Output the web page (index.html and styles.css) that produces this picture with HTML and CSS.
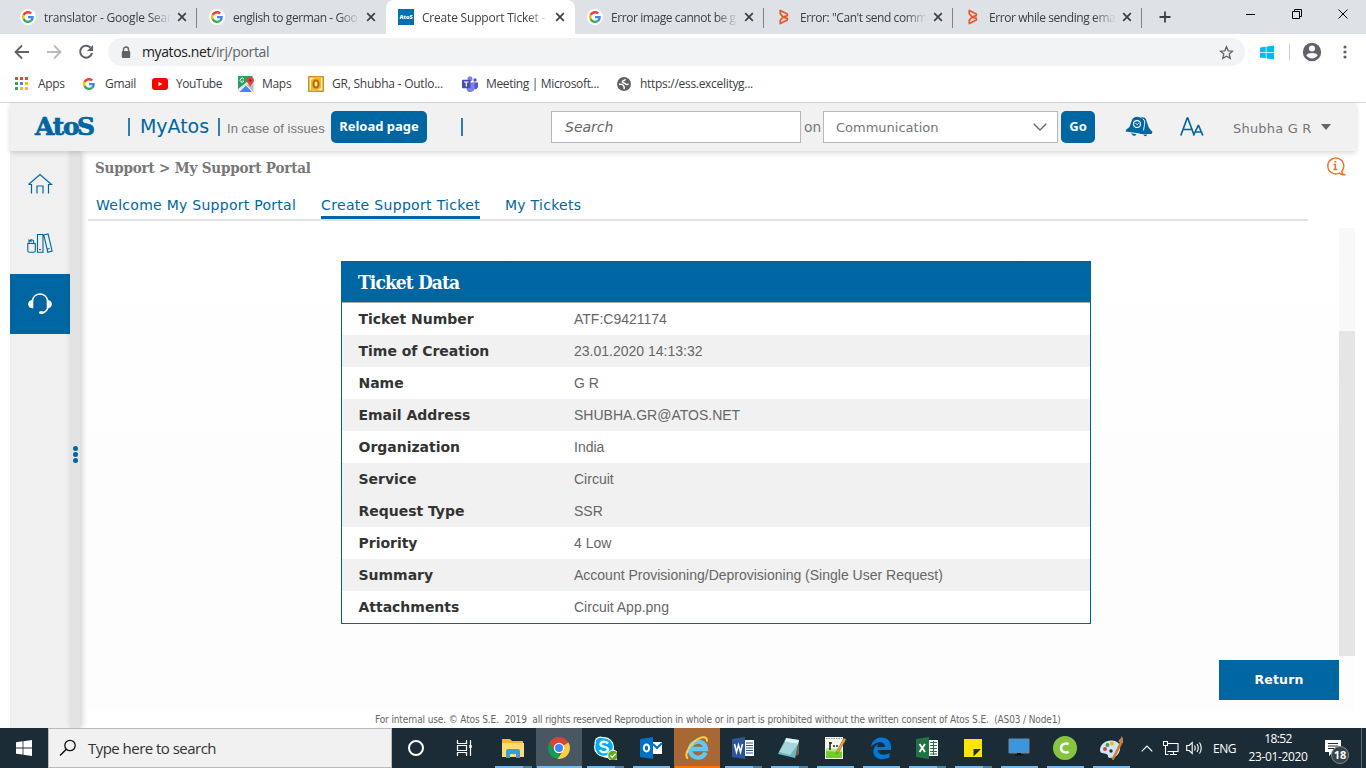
FILE: index.html
```html
<!DOCTYPE html>
<html lang="en">
<head>
<meta charset="utf-8">
<title>Create Support Ticket - MyAtos</title>
<link rel="stylesheet" href="styles.css">
</head>
<body>
<svg class="defs" aria-hidden="true">
  <symbol id="g" viewBox="0 0 48 48"><path fill="#ea4335" d="M24 9.500c3.500 0 6.700 1.200 9.200 3.600l6.900-6.900C35.900 2.400 30.500 0 24 0 14.600 0 6.500 5.400 2.600 13.200l8 6.200C12.400 13.700 17.700 9.500 24 9.500z"/><path fill="#4285f4" d="M47 24.500c0-1.600-.2-3.100-.4-4.500H24v9h12.900c-.6 3-2.200 5.500-4.700 7.200l7.700 6C44.400 38 47 31.800 47 24.500z"/><path fill="#fbbc05" d="M10.500 28.600a14.500 14.500 0 0 1 0-9.200l-8-6.200a24 24 0 0 0 0 21.600z"/><path fill="#34a853" d="M24 48c6.500 0 11.900-2.100 15.900-5.800l-7.700-6c-2.200 1.400-4.900 2.300-8.200 2.300-6.300 0-11.600-4.200-13.500-9.900l-8 6.200C6.500 42.600 14.600 48 24 48z"/></symbol>
  <symbol id="x" viewBox="0 0 10 10"><path d="M1.200 1.200l7.600 7.600M8.800 1.200L1.200 8.800" stroke="#3c4043" stroke-width="1.700"/></symbol>
  <symbol id="bmc" viewBox="0 0 10 16"><path d="M1.300 1.500L8.300 5v1.700L3.500 8l4.800 1.300V11l-7 3.500v-3.200L4 8 1.300 4.700z" fill="none" stroke="#f0562c" stroke-width="1.800" stroke-linejoin="round"/></symbol>
  <symbol id="win" viewBox="0 0 16 16"><path d="M0 2.200L6.600 1.300v6.200H0zM7.400 1.200L16 0v7.500H7.400zM0 8.400h6.600v6.200L0 13.700zM7.400 8.400H16V16l-8.600-1.200z"/></symbol>
</svg>

<div class="tabstrip">
  <div class="tab"><span class="fav"><svg><use href="#g"/></svg></span><span class="title">translator - Google Sear</span><svg class="close"><use href="#x"/></svg></div>
  <div class="tab nosep"><span class="fav"><svg><use href="#g"/></svg></span><span class="title tight">english to german - Goo</span><svg class="close"><use href="#x"/></svg></div>
  <div class="tab active"><span class="atosfav">AtoS</span><span class="title">Create Support Ticket -</span><svg class="close"><use href="#x"/></svg></div>
  <div class="tab"><span class="fav"><svg><use href="#g"/></svg></span><span class="title tight">Error image cannot be g</span><svg class="close"><use href="#x"/></svg></div>
  <div class="tab"><svg class="bmc"><use href="#bmc"/></svg><span class="title tight">Error: "Can't send comm</span><svg class="close"><use href="#x"/></svg></div>
  <div class="tab"><svg class="bmc"><use href="#bmc"/></svg><span class="title tight">Error while sending ema</span><svg class="close"><use href="#x"/></svg></div>
  <svg class="plus" viewBox="0 0 12 12"><path d="M6 .5v11M.5 6h11" stroke="#3c4043" stroke-width="1.800"/></svg>
  <svg class="wincontrols" viewBox="0 0 120 34"><path d="M6 14.500h9M52.500 11.500h7v7h-7zM54.500 11v-1.500h7v7H60M98.500 9.500l9 9M107.500 9.500l-9 9" fill="none" stroke="#000"/></svg>
</div>

<div class="toolbar">
  <svg class="nav" viewBox="0 0 100 36"><g fill="none" stroke-width="1.800"><path d="M29 18H16M22 11.500L15.500 18l6.500 6.500" stroke="#5f6368"/><path d="M47 18h13M54 11.500l6.500 6.500-6.500 6.500" stroke="#babcbe"/><path d="M90.500 13.500A6 6 0 1 0 92 19" stroke="#5f6368" stroke-width="2"/></g><path d="M93 11v6h-6z" fill="#5f6368"/></svg>
  <div class="omnibox">
    <svg class="lock" viewBox="0 0 10 13"><path d="M2.500 5.500V3.500a2.500 2.500 0 0 1 5 0v2" fill="none" stroke="#5f6368" stroke-width="1.400"/><rect x=".8" y="5" width="8.400" height="7" rx="1" fill="#5f6368"/></svg>
    <span class="url"><b>myatos.net</b>/irj/portal</span>
    <svg class="star" viewBox="0 0 16 16"><path d="M8 1.800l1.800 4.400 4.700.4-3.600 3.100 1.100 4.600L8 11.900l-4 2.400 1.100-4.600-3.600-3.100 4.700-.4z" fill="none" stroke="#5f6368" stroke-width="1.400"/></svg>
  </div>
  <svg class="winext"><use href="#win"/></svg>
  <i class="tbsep"></i>
  <svg class="person" viewBox="0 0 20 20"><circle cx="10" cy="10" r="9.200" fill="#5f6368"/><circle cx="10" cy="6.600" r="3" fill="#fff"/><path d="M4.300 13.300c1.600-3.200 9.800-3.200 11.400 0-2.800 4.200-8.600 4.200-11.400 0z" fill="#fff"/></svg>
  <svg class="kebab" viewBox="0 0 4 14"><g fill="#5f6368"><circle cx="2" cy="2" r="1.600"/><circle cx="2" cy="7" r="1.600"/><circle cx="2" cy="12" r="1.600"/></g></svg>
</div>

<div class="bookmarks">
  <svg class="bm apps" viewBox="0 0 13 13"><path d="M0 0h3v3H0zM5 0h3v3H5zM10 0h3v3h-3z" fill="#ea4335"/><path d="M0 5h3v3H0zM0 10h3v3H0z" fill="#34a853"/><path d="M5 5h3v3H5z" fill="#4285f4"/><path d="M10 5h3v3h-3zM5 10h3v3H5zM10 10h3v3h-3z" fill="#fbbc05"/></svg><span class="b1">Apps</span>
  <svg class="bm gm"><use href="#g"/></svg><span class="b2">Gmail</span>
  <svg class="bm yt" viewBox="0 0 16 12"><rect width="16" height="12" rx="3" fill="#f00"/><path d="M6.500 3.800v4.400L10.300 6z" fill="#fff"/></svg><span class="b3">YouTube</span>
  <svg class="bm mp" viewBox="0 0 16 16"><path d="M0 0h15L0 15z" fill="#1fa463"/><path d="M0 15.500V13l10-8 2 2-9 9z" fill="#e8e8e8"/><path d="M1.500 16l6.500-6.500L14 16z" fill="#4285f4"/><path d="M15.500 6v10L8.500 9z" fill="#b9bec5"/><path d="M8.500 4.500a3.700 3.700 0 0 1 7.400 0c0 2.500-3 3.500-3.700 6.500-.7-3-3.700-4-3.700-6.500z" fill="#ea4335"/><circle cx="12.200" cy="4.500" r="1.300" fill="#8c2a20"/><path d="M5.800 3A2 2 0 1 0 6 5H4.500" fill="none" stroke="#fff"/></svg><span class="b4">Maps</span>
  <svg class="bm ol" viewBox="0 0 16 16"><rect x=".8" y=".8" width="14.400" height="14.400" fill="#fff6cf" stroke="#d68b12" stroke-width="1.500"/><path d="M3 4l3-2h7v10l-3 2H3z" fill="#f5b91f"/><ellipse cx="8" cy="8" rx="2.600" ry="3.700" fill="none" stroke="#b96500" stroke-width="1.800"/><ellipse cx="8" cy="8" rx="1.200" ry="2.400" fill="#fff2b0"/></svg><span class="b5">GR, Shubha - Outlo...</span>
  <svg class="bm tm" viewBox="0 0 16 16"><circle cx="8" cy="2.800" r="2.500" fill="#7b83eb"/><circle cx="13" cy="4" r="1.700" fill="#5059c9"/><path d="M11 6.500h5V11a3 3 0 0 1-4 2z" fill="#5059c9"/><path d="M4 6.500h8.500v5a4 4 0 0 1-8 1z" fill="#7b83eb"/><rect y="3.800" width="8.500" height="8.500" rx=".8" fill="#464eb8"/><path d="M2 6h4.600M4.300 6v4.500" stroke="#fff" stroke-width="1.200"/></svg><span class="b6">Meeting | Microsoft...</span>
  <svg class="bm gl" viewBox="0 0 14 14"><circle cx="7" cy="7" r="7" fill="#5f6368"/><path d="M8.500 2.200C8 4 5.500 3 5.300 4.800 5.300 6.500 8 5.500 8.500 7c.8.800 2 .2 3.200.4M2 7c1.800.5 4 .3 4.500 1.600.3 1.200 1.300 1.200.5 3.400" fill="none" stroke="#fff" stroke-width="1.500"/></svg><span class="b7">https://ess.excelityg...</span>
</div>

<main class="portal">
  <header class="head">
    <span class="logo">At<span class="ring">o</span>S</span>
    <i class="bar"></i><span class="brand">MyAtos</span><i class="bar"></i>
    <span class="issues">In case of issues</span>
    <span class="btn reload">Reload page</span>
    <i class="bar"></i>
    <div class="search">Search</div>
    <span class="on">on</span>
    <div class="select"><span>Communication</span><svg viewBox="0 0 14 8"><path d="M.7.7L7 7 13.300.7" fill="none" stroke="#666" stroke-width="1.300"/></svg></div>
    <span class="btn go">Go</span>
    <svg class="bell" viewBox="0 0 28 22"><g fill="#0066a1"><path d="M15 2.500c2-2 5-1.500 6 1l3 8.500 3.500 4-1 2H15z"/><path d="M7 4Q8.500 .8 12.500.8L17 2q2.500 1.500 1.800 5L18 14l.5 4L.5 15.500l.8-2L4.500 11z"/><path d="M6 17.300l5.500 1q-2.500 4-5.500-1zM18 18.500h4.500q-2 3.500-4.500 0z"/></g><circle cx="12" cy="8" r="3.400" fill="none" stroke="#fff" stroke-width="1.100"/><path d="M10.500 7l1.500 1.700 1.800-1.500" fill="none" stroke="#fff" stroke-width=".9"/><path d="M17.800 2.500q3 2 1.700 6l-1 6" fill="none" stroke="#fff" stroke-width=".9"/></svg>
    <svg class="aa" viewBox="0 0 24 20"><path d="M.8 18.500L7.200 1h.6l6.400 17.500M3 12.500h9M13.500 18.500L18.200 8.500h.4l4.200 10M15.500 15h6" fill="none" stroke="#0066a1" stroke-width="1.700"/></svg>
    <span class="user">Shubha G R</span><i class="caret"></i>
  </header>
  <div class="work">
    <nav class="side">
      <a><svg viewBox="0 0 26 22"><path d="M1.500 11.500L13 1.500l11.500 10h-3v9M1.500 11.500h3v9M10 20.500v-7.500h6v7.500" fill="none" stroke="#0066a1" stroke-width="1.200"/></svg></a>
      <a><svg viewBox="0 0 26 22"><path d="M.8 10.500h7.500v7.300q0 1.500-1.500 1.500H2.300q-1.500 0-1.500-1.500zM2 10V7l2 1.500V6.500l2.500 1V10M10.500 1.500h5.500v17.800h-5.500zM16.800 2l4.300-1 4 17-4.300 1.200zM12 16.500h2M20.500 16l2-.5" fill="none" stroke="#0066a1" stroke-width="1.100"/></svg></a>
      <a class="on-item"><svg viewBox="0 0 26 24"><path d="M4.500 9C6-1.500 20-1.500 21.500 9M22 15c-1 4-4 6.500-8 7" fill="none" stroke="#fff" stroke-width="1.700"/><path d="M5.700 7.500v9.200C2.500 17 0 15 0 12s2.500-4.500 5.700-4.500zM20.300 7.500v9.200c3.200.3 5.700-1.700 5.700-4.700s-2.500-4.500-5.700-4.500z" fill="#fff"/><rect x="12" y="20" width="5" height="3" rx="1.500" fill="#fff"/></svg></a>
    </nav>
    <div class="splitter"><i></i><i></i><i></i></div>
    <section class="content">
      <div class="crumbs"><span>Support &gt; My Support Portal</span>
        <svg viewBox="0 0 20 20"><path d="M13.500 16a8 8 0 1 1 2.300-1.800l.6 2.800 2 .8q-3 .5-4.900-1.800z" fill="none" stroke="#f26b21" stroke-width="1.400"/><path d="M7.500 7.500H9.300v4.800M7.300 12.500h4M8.500 4.800h1.700" fill="none" stroke="#f26b21" stroke-width="1.500"/></svg></div>
      <div class="subnav"><span>Welcome My Support Portal</span><span class="cur">Create Support Ticket</span><span>My Tickets</span></div>
      <div class="pane">
        <div class="inner">
          <div class="card">
            <h2>Ticket Data</h2>
            <dl>
              <div><dt>Ticket Number</dt><dd>ATF:C9421174</dd></div>
              <div class="alt"><dt>Time of Creation</dt><dd>23.01.2020 14:13:32</dd></div>
              <div><dt>Name</dt><dd>G R</dd></div>
              <div class="alt"><dt>Email Address</dt><dd>SHUBHA.GR@ATOS.NET</dd></div>
              <div><dt>Organization</dt><dd>India</dd></div>
              <div class="alt"><dt>Service</dt><dd>Circuit</dd></div>
              <div class="alt"><dt>Request Type</dt><dd>SSR</dd></div>
              <div><dt>Priority</dt><dd>4 Low</dd></div>
              <div class="alt"><dt>Summary</dt><dd>Account Provisioning/Deprovisioning (Single User Request)</dd></div>
              <div><dt>Attachments</dt><dd>Circuit App.png</dd></div>
            </dl>
          </div>
          <div class="return">Return</div>
        </div>
        <div class="scroll"><i></i></div>
      </div>
      <footer><span>For internal use. © Atos S.E.&nbsp; 2019&nbsp; all rights reserved Reproduction in whole or in part is prohibited without the written consent of Atos S.E.&nbsp; (AS03 / Node1)</span></footer>
    </section>
  </div>
</main>

<div class="taskbar">
  <div class="start"><svg><use href="#win"/></svg></div>
  <div class="tsearch"><svg viewBox="0 0 18 18"><circle cx="11" cy="6.500" r="5.200" fill="none" stroke="#111" stroke-width="1.300"/><path d="M7.300 10.300L1 16.500" stroke="#111" stroke-width="1.500"/></svg><span>Type here to search</span></div>
  <div class="sys"><svg viewBox="0 0 18 18"><circle cx="9" cy="9" r="7" fill="none" stroke="#fff" stroke-width="2"/></svg></div>
  <div class="sys"><svg viewBox="0 0 18 18"><path d="M2.500 1v3.500h9V1M2.500 17v-3.500h9V17M2.500 6.500h9v5h-9zM15.500 1v16" fill="none" stroke="#fff" stroke-width="1.200"/><path d="M14.300 6h2.400v3h-2.400z" fill="#fff"/></svg></div>
  <div class="apps-row">
    <div class="app two"><svg viewBox="0 0 24 24"><path d="M1 3h8l2 2h11v15H1z" fill="#f4b92e"/><path d="M1 7h22v14H1z" fill="#ffdc75"/><path d="M5 22v-7q0-2 2-2h10q2 0 2 2v7h-4v-4H9v4z" fill="#3d9ae2"/></svg></div>
    <div class="app hot"><svg viewBox="0 0 24 24"><path d="M12 12L2.500 6.500A11 11 0 0 1 21.500 6.500z" fill="#db4437"/><path d="M12 12L2.500 6.500A11 11 0 0 0 12 23z" fill="#0f9d58"/><path d="M12 12l9.500-5.500A11 11 0 0 1 12 23l-1.500-.1L16.500 14z" fill="#ffcd40"/><path d="M2.500 6.500L7 14l5-7h9.700" fill="#db4437"/><circle cx="12" cy="12" r="5.200" fill="#fff"/><circle cx="12" cy="12" r="4" fill="#4285f4"/></svg></div>
    <div class="app two"><svg viewBox="0 0 24 24"><circle cx="7.500" cy="6.500" r="6" fill="#fff"/><circle cx="14" cy="15" r="7" fill="#fff"/><circle cx="11" cy="11" r="10" fill="#fff"/><circle cx="11" cy="11" r="8.800" fill="#00aff0"/><circle cx="7.500" cy="6.500" r="4.800" fill="#00aff0"/><path d="M15 7.500C13 5 7 5 7.500 8.500c.4 3 7.500 1.500 7.500 5 0 3.500-6.500 3.500-8 .5" fill="none" stroke="#fff" stroke-width="2.300"/><circle cx="20" cy="19.500" r="5.300" fill="#5fad13" stroke="#fff"/><path d="M17.500 19.500l1.800 1.800 3.300-3.500" fill="none" stroke="#fff" stroke-width="1.400"/></svg></div>
    <div class="app"><svg viewBox="0 0 24 24"><path d="M13 6h10v12H13z" fill="#fff"/><path d="M14 8l4 4 5-5" fill="none" stroke="#0072c6" stroke-width="2"/><path d="M1 3l13-2v22L1 21z" fill="#0072c6"/><ellipse cx="7.500" cy="12" rx="2.700" ry="3.500" fill="none" stroke="#fff" stroke-width="2"/></svg></div>
    <div class="app ie"><svg viewBox="0 0 24 24"><path d="M20.500 16.500A8 8 0 1 1 21 13H7" fill="none" stroke="#5fc8f4" stroke-width="4.300"/><path d="M3 22.500C-1 20 3 11 9.500 5.500S22.500-.5 22 5.500" fill="none" stroke="#f8d34a" stroke-width="2"/></svg></div>
    <div class="app two"><svg viewBox="0 0 24 24"><path d="M13 4h10v16H13z" fill="#fff"/><path d="M15 7h7M15 9.500h7M15 12h7M15 14.500h7M15 17h7" stroke="#2b579a"/><path d="M1 3l13-2v22L1 21z" fill="#2b579a"/><path d="M3.500 8l2 8 2-7 2 7 2-8" fill="none" stroke="#fff" stroke-width="1.500"/></svg></div>
    <div class="app two"><svg viewBox="0 0 24 24"><path d="M22 5v13l-4 3z" fill="#735c45"/><path d="M9 2l13 2-4 18L1 18z" fill="#6fb3bd"/><path d="M9 2l13 2-1 4L8 6z" fill="#dff3f5"/><path d="M8 6l13 2-8 11-11-3z" fill="#a5d6dc"/></svg></div>
    <div class="app"><svg viewBox="0 0 24 24"><path d="M2 1h18v22H2z" fill="#f4f6ee"/><path d="M3 14h16v8H3z" fill="#6fce2e"/><path d="M3 12l16 1v3L3 15z" fill="#b8e88f"/><path d="M7 6v8M6 7h3M10 10h2M13 10h2" stroke="#222" stroke-width="1.500"/><path d="M3 2.500h16" stroke="#999" stroke-dasharray="1.500 1"/><path d="M21 2l2 1.500L15 17l-2 1 .5-2.500z" fill="#e5a83a" stroke="#8a5a20" stroke-width=".6"/></svg></div>
    <div class="app"><svg viewBox="0 0 24 24"><path d="M2 11C3 4 8 1.500 12.500 1.500 19 1.500 22 6 22 11v3H8.500c.3 5 7.500 6 12 3v4.500C11 26 3 21 4.500 14 5 11 7 9 9.500 8 8.500 9 8.200 10 8.200 11H16c0-6-8.500-6.500-14 0z" fill="#0078d7"/></svg></div>
    <div class="app two"><svg viewBox="0 0 24 24"><path d="M13 4h10v16H13z" fill="#fff"/><path d="M15 6.500h7M15 9.500h7M15 12.500h7M15 15.500h7M15 18h7M18.500 5v14" stroke="#217346"/><path d="M1 3l13-2v22L1 21z" fill="#217346"/><path d="M4.500 8l5.500 8M10 8l-5.500 8" stroke="#fff" stroke-width="1.900"/></svg></div>
    <div class="app two"><svg viewBox="0 0 24 24"><path d="M3 3h18v18H3z" fill="#ffe600"/><path d="M12.500 20.500v-7.500H20z" fill="#1e2e38"/></svg></div>
    <div class="app"><svg viewBox="0 0 24 24"><path d="M2 3h20v14H2z" fill="#3b96dd" stroke="#6e8796"/><path d="M10 17h4v1.500h2v1H8v-1h2z" fill="#111"/></svg></div>
    <div class="app"><svg viewBox="0 0 24 24"><circle cx="12" cy="12" r="12" fill="#86c540"/><path d="M15.500 8.500c-2-2-7.500-1-7.500 3.500s5.500 5.500 7.500 3.500" fill="none" stroke="#fff" stroke-width="2.500"/></svg></div>
    <div class="app"><svg viewBox="0 0 24 24"><path d="M1 14C1 8 7 4 13 4.500c5 .4 9 3 8 9-.8 5-5 8.500-10 8.500-3 0-1-3-3.500-4S1 18 1 14z" fill="#cfe6f3"/><circle cx="6" cy="13" r="2" fill="#e23f37"/><circle cx="8.500" cy="9" r="2" fill="#3fa345"/><circle cx="13" cy="7.500" r="2" fill="#f1b81c"/><circle cx="12" cy="15" r="1.700" fill="#1e2e38"/><path d="M22 5l-9 18 1.500.5L23.500 6z" fill="#d87e25" stroke="#d87e25"/><path d="M19.500 6c0-3 3-3 3-6 2 2 2 5 1 7z" fill="#b6865f"/></svg></div>
  </div>
  <svg class="chev" viewBox="0 0 12 7"><path d="M.7 6.300L6 1l5.300 5.300" fill="none" stroke="#fff" stroke-width="1.200"/></svg>
  <svg class="net" viewBox="0 0 17 14"><path d="M5 2.500h11v8H5.500M8 13.500h7M11.500 10.500v3M3.500 5v8.500h3M1.500.5h4v4h-4z" fill="none" stroke="#fff" stroke-width="1.100"/></svg>
  <svg class="vol" viewBox="0 0 17 14"><path d="M.7 4.500h2.500l3-3v11l-3-3H.7zM8.500 4.500q1.500 2.500 0 5M11 3q2.500 4 0 8M13.500 1.500q3.500 5.500 0 11" fill="none" stroke="#fff" stroke-width="1.100"/></svg>
  <span class="lang">ENG</span>
  <div class="clock"><span class="time">18:52</span><span class="date">23-01-2020</span></div>
  <div class="note"><svg viewBox="0 0 16 16"><path d="M0 0h16v12H8l-4 4v-4H0z" fill="#fff"/><path d="M3 3.500h10M3 6h10M3 8.500h6" stroke="#1e2e38"/></svg><b>18</b></div>
  <i class="peek"></i>
</div>
</body>
</html>
```
FILE: styles.css
```css
* { box-sizing: border-box; }
body { margin: 0; width: 1366px; height: 768px; overflow: hidden; background: #fff; display: flex; flex-direction: column; font-family: "Open Sans", "Noto Sans", sans-serif; font-size: 12px; color: #3c4043; }
svg { display: block; flex: none; }
span { white-space: nowrap; }
.defs { width: 0; height: 0; position: absolute; }

/* browser tabs */
.tabstrip { height: 34px; flex: none; background: #dee1e6; display: flex; padding-left: 8px; align-items: stretch; }
.tab { width: 189px; flex: none; display: flex; align-items: center; padding-left: 12px; background: linear-gradient(#808388, #808388) 100% 8px / 1px 20px no-repeat; }
.tab.nosep { background: none; }
.tab.active { background: #fff; border-radius: 8px 8px 0 0; }
.fav { width: 16px; height: 16px; border-radius: 50%; background: #fff; display: grid; place-items: center; flex: none; }
.fav svg { width: 12px; height: 12px; }
.atosfav { width: 16px; height: 16px; background: #0071b3; color: #fff; font-size: 5.500px; line-height: 16px; text-align: center; font-weight: 800; }
.bmc { width: 10px; height: 16px; margin: 0 3px; }
.title { width: 129px; margin-left: 8px; overflow: hidden; -webkit-mask-image: linear-gradient(90deg, #000 105px, transparent 127px); mask-image: linear-gradient(90deg, #000 105px, transparent 127px); letter-spacing: -0.2px; }
.title.tight { letter-spacing: -0.42px; }
.close { width: 10px; height: 10px; margin-left: 4px; }
.plus { width: 12px; height: 12px; margin: 11px 0 0 17px; }
.wincontrols { width: 120px; height: 34px; margin-left: 69px; }

/* address bar */
.toolbar { height: 36px; flex: none; display: flex; align-items: center; }
.nav { width: 100px; height: 36px; }
.omnibox { width: 1137px; height: 28px; margin-left: 8px; border-radius: 14px; background: #f1f3f4; display: flex; align-items: center; padding: 0 11px 0 13px; }
.lock { width: 10px; height: 13px; }
.url { margin: -2px 0 0 11px; font-size: 14px; color: #5f6368; letter-spacing: -0.38px; }
.url b { font-weight: 400; color: #202124; }
.star { width: 15px; height: 15px; margin-left: auto; }
.winext { width: 14px; height: 15px; margin-left: 15px; fill: #00bcf2; }
.tbsep { width: 1px; height: 16px; background: #c8cacd; margin-left: 15px; }
.person { width: 20px; height: 20px; margin-left: 12px; }
.kebab { width: 4px; height: 14px; margin-left: 21px; }

/* bookmarks */
.bookmarks { height: 33px; flex: none; display: flex; align-items: center; padding: 0 0 5px 15px; border-bottom: 1px solid #d5d7db; letter-spacing: -0.3px; }
.bm { margin-right: 10px; }
.apps { width: 13px; height: 13px; }
.gm { width: 12px; height: 12px; }
.yt { width: 16px; height: 12px; margin-right: 8px; }
.mp, .ol, .tm { width: 16px; height: 16px; margin-right: 8px; }
.gl { width: 14px; height: 14px; margin-right: 9px; }
.b1 { width: 45px; }
.b2 { width: 47px; }
.b3 { width: 62px; letter-spacing: -0.48px; }
.b4 { width: 46px; }
.b5 { width: 130px; letter-spacing: -0.23px; }
.b6 { width: 131px; letter-spacing: -0.35px; }

/* portal header */
.portal { flex: 1; min-height: 0; display: flex; flex-direction: column; padding: 0 10px; }
.head { height: 48px; flex: none; background: #f1f1f1; display: flex; align-items: center; box-shadow: 0 2px 5px rgba(0,0,0,.16); position: relative; z-index: 2; padding-left: 24px; font-family: "DejaVu Sans", sans-serif; color: #767676; }
.logo { width: 94px; padding-left: 1px; color: #0066a1; font: bold 25px/28px "DejaVu Serif", serif; letter-spacing: -1.300px; -webkit-text-stroke: .7px #0066a1; }
.ring { letter-spacing: -2.500px; }
.bar { width: 2px; height: 18px; background: #2b7fb1; }
.brand { margin: -2px 8px 0 10px; width: 70px; font-size: 19px; letter-spacing: -0.05px; color: #0066a1; }
.issues { font: 13px "Liberation Sans", sans-serif; width: 104px; margin-left: 7px; padding-top: 3px; letter-spacing: .05px; }
.btn { height: 32px; border-radius: 5px; background: #0066a1; color: #fff; font: bold 13px/31px "Noto Sans", sans-serif; text-align: center; }
.reload { width: 96px; margin-right: 34px; }
.search { width: 250px; height: 32px; margin-left: 88px; border: 1px solid #b8b8b8; background: #fff; font-style: italic; font-size: 14px; line-height: 30px; padding-left: 13px; color: #666; }
.on { font: 14px "Noto Sans", sans-serif; margin: -2px 0 0 3px; width: 19px; }
.select { width: 235px; height: 32px; border: 1px solid #b8b8b8; background: #fff; font-size: 13px; display: flex; justify-content: space-between; align-items: center; padding: 0 10px 0 12px; }
.select svg { width: 14px; height: 8px; }
.go { width: 34px; margin-left: 3px; }
.bell { width: 28px; height: 22px; margin-left: 30px; }
.aa { width: 24px; height: 20px; margin-left: 27px; }
.user { width: 88px; margin-left: 29px; font-size: 13px; padding-top: 3px; letter-spacing: .2px; }
.caret { border: 5px solid transparent; border-top: 6px solid #666; border-bottom: 0; }

/* workspace */
.work { flex: 1; min-height: 0; display: flex; }
.side { width: 60px; background: #f0f0f0; padding-top: 3px; }
.side a { height: 60px; display: grid; place-items: center; }
.side svg { width: 26px; height: 22px; }
.side .on-item { background: #0066a1; }
.splitter { width: 10px; background: #e3e3e3; box-shadow: 2px 0 6px rgba(0,0,0,.2); display: flex; flex-direction: column; align-items: center; gap: 1px; padding: 295px 0 0 0; }
.splitter i { width: 5px; height: 5px; border-radius: 50%; background: #0066a1; }
.content { flex: 1; min-width: 0; padding-left: 8px; display: flex; flex-direction: column; }
.crumbs { height: 40px; display: flex; justify-content: space-between; padding: 6px 10px 0 7px; font: bold 15px/22px "DejaVu Serif Condensed", "DejaVu Serif", serif; letter-spacing: -0.17px; color: #777; }
.crumbs svg { width: 20px; height: 20px; }
.subnav { width: 1220px; height: 30px; border-bottom: 2px solid #e3e3e3; display: flex; gap: 25px; padding-left: 8px; font: 14px/28px "DejaVu Sans", sans-serif; letter-spacing: .27px; color: #0066a1; }
.subnav span { height: 28px; }
.subnav .cur { border-bottom: 3px solid #0066a1; letter-spacing: .32px; }
.pane { height: 483px; margin-top: 7px; display: flex; width: 1267px; background: linear-gradient(#fff, #fdfdfd 60%); }
.inner { flex: 1; display: flex; flex-direction: column; padding-top: 33px; }
.scroll { width: 16px; height: 428px; background: #f8f8f8; padding-top: 103px; }
.scroll i { display: block; height: 325px; background: #e5e5e5; }
.card { width: 750px; height: 363px; margin-left: 253px; border: 1px solid #0066a1; background: #fff; }
.card h2 { margin: 0; height: 41px; padding-left: 16px; background: #0066a1; color: #fff; font: bold 19px/41px "DejaVu Serif Condensed", "DejaVu Serif", serif; letter-spacing: -0.9px; border-bottom: 1px solid #aaa; }
.card dl { margin: 0; }
.card dl div { height: 32px; display: flex; line-height: 32px; padding-left: 16.500px; }
.card .alt { background: #f1f1f1; }
.card dt { width: 215.500px; font: bold 14px/32px "DejaVu Sans", sans-serif; letter-spacing: -0.02px; color: #333; }
.card dd { margin: 0; font: 14px/32px "Liberation Sans", sans-serif; color: #666; }
.return { width: 120px; height: 40px; margin: 36px 0 0 auto; background: #0066a1; color: #fff; text-align: center; font: bold 12.500px/40px "DejaVu Sans", sans-serif; letter-spacing: .2px; }
footer { margin-left: 287px; padding-top: 2px; font: 10px/14px "DejaVu Sans Condensed", "DejaVu Sans", sans-serif; letter-spacing: -0.12px; color: #666; }

/* taskbar */
.taskbar { height: 40px; flex: none; background: #1c2c37; display: flex; color: #fff; align-items: center; }
.start { width: 48px; display: grid; place-items: center; }
.start svg { width: 16px; height: 16px; fill: #fff; }
.tsearch { width: 344px; height: 40px; background: #f1f1f1; border: 1px solid #bbb; color: #333; display: flex; align-items: center; font-size: 15px; letter-spacing: -0.53px; padding-left: 10px; }
.tsearch svg { width: 18px; height: 18px; margin-right: 11px; }
.sys { width: 48px; display: grid; place-items: center; }
.sys svg { width: 18px; height: 18px; }
.apps-row { display: flex; height: 40px; margin-left: 2px; }
.app { width: 46px; display: grid; place-items: center; background: linear-gradient(#76b9ed, #76b9ed) 5px 38px / 37px 2px no-repeat; }
.app.two { background: linear-gradient(90deg, #76b9ed 28px, #527fa5 28px) 5px 38px / 37px 2px no-repeat; }
.app.hot { background: linear-gradient(#76b9ed, #76b9ed) 1px 38px / 45px 2px no-repeat, #485761; }
.app.ie { background: linear-gradient(#ff7300, #ff7300) 1px 38px / 45px 2px no-repeat, #a96735; }
.app svg { width: 24px; height: 24px; }
.chev { width: 12px; height: 7px; margin-left: 7px; }
.net { width: 17px; height: 14px; margin-left: 9px; }
.vol { width: 17px; height: 14px; margin-left: 7px; }
.lang { margin-left: 10px; width: 33px; letter-spacing: -0.48px; }
.clock { width: 64px; height: 40px; display: flex; flex-direction: column; align-items: center; line-height: 18px; padding-top: 2px; letter-spacing: -0.36px; }
.time { letter-spacing: -0.6px; }
.note { position: relative; width: 16px; height: 16px; margin-left: 15px; }
.note svg { width: 16px; height: 16px; }
.note b { position: absolute; left: 6px; top: 6px; width: 18px; height: 18px; border-radius: 50%; background: #36434c; border: 1px solid #888; font-size: 11px; line-height: 16px; text-align: center; }
.peek { width: 1px; height: 40px; background: #5d6a73; margin-left: 20px; }
```
